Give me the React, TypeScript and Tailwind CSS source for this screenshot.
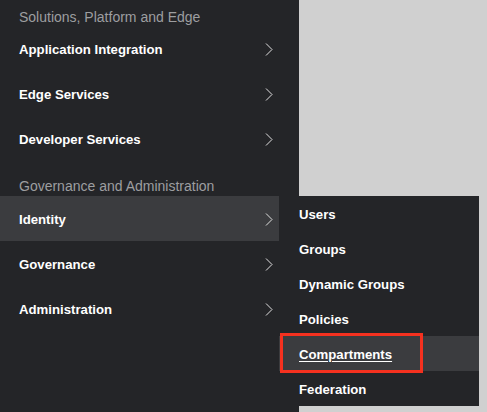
const solutions = ['Application Integration', 'Edge Services', 'Developer Services'];
const governance = ['Identity', 'Governance', 'Administration'];
const identityItems = ['Users', 'Groups', 'Dynamic Groups', 'Policies', 'Compartments', 'Federation'];

const Row = ({ label, active }: { label: string; active?: boolean }) => (
  <div
    className={`flex h-[45px] items-center justify-between pl-[19px] pt-[2px] text-[13.2px] font-bold text-white ${
      active ? 'w-[279px] bg-[#3b3c3f] pr-[6px]' : 'pr-[26px]'
    }`}
  >
    <span>{label}</span>
    <svg width="8" height="13" viewBox="0 0 8 13" className="text-[#e0e0e0]">
      <path d="M1 0.5 L7 6.5 L1 12.5" fill="none" stroke="currentColor" strokeWidth="1" />
    </svg>
  </div>
);

export default function App() {
  return (
    <div
      className="relative h-[412px] w-[487px] overflow-hidden bg-[#d0d0d0]"
      style={{ fontFamily: '"Liberation Sans", Arial, sans-serif' }}
    >
      <div className="h-full w-[299px] bg-[#242528]">
        <div className="flex h-[26px] items-center pl-[19px] pt-[8px] text-[14px] text-[#9d9ea0]">
          Solutions, Platform and Edge
        </div>
        {solutions.map((s) => (
          <Row key={s} label={s} />
        ))}
        <div className="flex h-[35px] items-center pl-[19px] pt-[16px] text-[14px] text-[#9d9ea0]">
          Governance and Administration
        </div>
        {governance.map((s) => (
          <Row key={s} label={s} active={s === 'Identity'} />
        ))}
      </div>

      <div className="absolute left-[279px] top-[196px] w-[200px] bg-[#242528]">
        {identityItems.map((s) => (
          <div
            key={s}
            className={`flex h-[35px] items-center pl-[20px] pt-[2px] text-[13.2px] font-bold text-white ${
              s === 'Compartments' ? 'bg-[#3b3c3f] underline underline-offset-2' : ''
            }`}
          >
            {s}
          </div>
        ))}
      </div>

      <div className="absolute left-[280px] top-[333px] h-[40px] w-[143px] border-[3px] border-[#f5311f]" />
    </div>
  );
}
